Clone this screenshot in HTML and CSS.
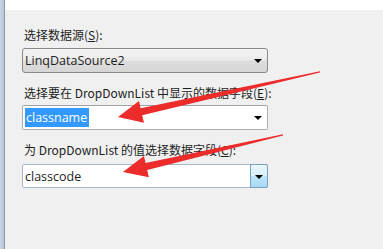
FILE: index.html
```html
<!DOCTYPE html>
<html lang="zh-CN">
<head>
<meta charset="utf-8">
<link rel="stylesheet" href="styles.css">
</head>
<body>
<div class="window">
  <div class="edge"></div>
  <div class="main">
    <div class="topstrip"></div>
    <div class="panel">
      <div class="label l1">选择数据源(<u>S</u>):</div>
      <div class="combo readonly">
        <span class="value">LinqDataSource2</span>
        <span class="arrow"></span>
      </div>
      <div class="label l2">选择要在 DropDownList 中显示的数据字段(<u>E</u>):</div>
      <div class="combo field">
        <span class="value"><span class="selected">classname</span></span>
        <span class="arrow"></span>
      </div>
      <div class="label l3">为 DropDownList 的值选择数据字段(<u>C</u>):</div>
      <div class="combo field hover">
        <span class="value">classcode</span>
        <span class="button"><span class="arrow"></span></span>
      </div>
    </div>
  </div>
</div>
<svg class="marks" width="383" height="249" viewBox="0 0 383 249">
  <polygon fill="#ec2b2b" points="118,117 139,101 140.6,108.3 320,71.3 320,72.5 142.2,115.2 144,122.8"/>
  <polygon fill="#ec2b2b" points="123,172 143.9,155.9 145.6,163.1 283,134.3 283,135.5 147.2,170 148.9,177.3"/>
</svg>
</body>
</html>
```
FILE: styles.css
```css
html, body {
  margin: 0;
  padding: 0;
  width: 383px;
  height: 249px;
  overflow: hidden;
  background: #f0f0f0;
  font-family: "Segoe UI", "Open Sans", "Noto Sans CJK SC", sans-serif;
  font-size: 12px;
  color: #1e1e1e;
}

.window {
  display: flex;
  height: 249px;
}

.edge {
  width: 4px;
  flex: none;
  background: linear-gradient(to right, #c9d6e3, #b7c6d6);
  border-right: 1px solid #8c9cac;
}

.main {
  flex: 1;
  display: flex;
  flex-direction: column;
}

.topstrip {
  height: 10px;
  background: #ffffff;
  flex: none;
}

.panel {
  padding: 17px 0 0 17px;
  display: flex;
  flex-direction: column;
}

.label {
  height: 16px;
  line-height: 16px;
  padding-left: 2px;
  white-space: nowrap;
  font-family: "Noto Sans CJK SC", sans-serif;
  font-size: 12px;
}

.label u {
  text-decoration: underline;
  text-underline-offset: 1px;
}

.l1 { margin-bottom: 5px; }
.l2 { margin-top: 12px; margin-bottom: 4px; }
.l3 { margin-top: 12px; margin-bottom: 6px; }

.combo {
  box-sizing: border-box;
  width: 246px;
  height: 25px;
  display: flex;
  align-items: center;
  border-radius: 3px;
  position: relative;
}

.combo.readonly {
  border: 1px solid #8a8a8a;
  background: linear-gradient(to bottom, #f3f3f3 0%, #ebebeb 48%, #dddddd 52%, #d6d6d6 100%);
}

.combo.field {
  border: 1px solid #abadb3;
  border-top-color: #a0a3aa;
  background: #ffffff;
  border-radius: 2px;
}

.combo.hover {
  height: 24px;
  border-color: #a8b8c8;
}

.value {
  padding-left: 2px;
  font-family: "Segoe UI", "Open Sans", sans-serif;
  font-size: 12.5px;
  line-height: 19px;
  flex: 1;
  display: flex;
}

.selected {
  background: #3399ff;
  color: #ffffff;
  padding: 0 2px 0 1px;
}

.combo .arrow {
  width: 0;
  height: 0;
  border-left: 4px solid transparent;
  border-right: 4px solid transparent;
  border-top: 4px solid #000000;
  margin-right: 5px;
  margin-top: 1px;
}

.button {
  align-self: stretch;
  width: 16px;
  margin: -1px -1px -1px 0;
  border: 1px solid #7a9ec0;
  border-radius: 0 2px 2px 0;
  background: linear-gradient(to bottom, #eaf6fd 0%, #d9f0fc 48%, #bee6fd 52%, #a7d9f5 100%);
  display: flex;
  align-items: center;
  justify-content: center;
}

.button .arrow {
  margin-right: 0;
}

.marks {
  position: absolute;
  left: 0;
  top: 0;
  pointer-events: none;
}
```
